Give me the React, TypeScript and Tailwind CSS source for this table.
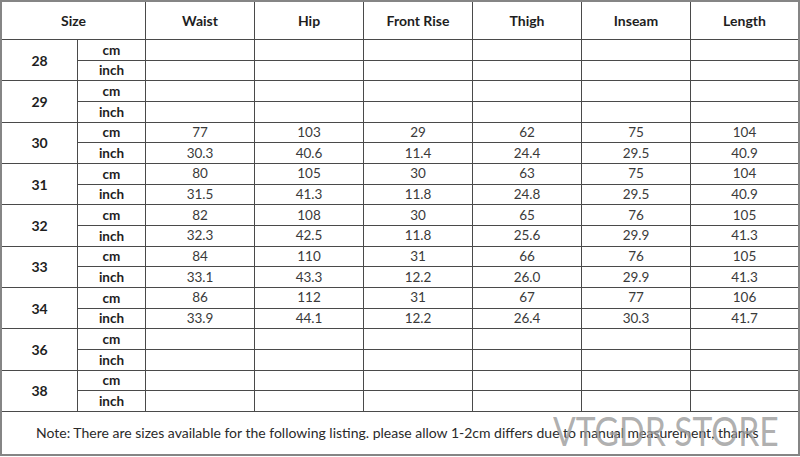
import React from 'react';

const headers = ['Waist', 'Hip', 'Front Rise', 'Thigh', 'Inseam', 'Length'];

type SizeRow = { size: string; cm: string[]; inch: string[] };

const empty = ['', '', '', '', '', ''];

const rows: SizeRow[] = [
  { size: '28', cm: empty, inch: empty },
  { size: '29', cm: empty, inch: empty },
  { size: '30', cm: ['77', '103', '29', '62', '75', '104'], inch: ['30.3', '40.6', '11.4', '24.4', '29.5', '40.9'] },
  { size: '31', cm: ['80', '105', '30', '63', '75', '104'], inch: ['31.5', '41.3', '11.8', '24.8', '29.5', '40.9'] },
  { size: '32', cm: ['82', '108', '30', '65', '76', '105'], inch: ['32.3', '42.5', '11.8', '25.6', '29.9', '41.3'] },
  { size: '33', cm: ['84', '110', '31', '66', '76', '105'], inch: ['33.1', '43.3', '12.2', '26.0', '29.9', '41.3'] },
  { size: '34', cm: ['86', '112', '31', '67', '77', '106'], inch: ['33.9', '44.1', '12.2', '26.4', '30.3', '41.7'] },
  { size: '36', cm: empty, inch: empty },
  { size: '38', cm: empty, inch: empty },
];

const line = 'border-[#4a4a4a]';

const ValueRow: React.FC<{ unit: string; values: string[] }> = ({ unit, values }) => (
  <>
    <div className={`flex items-center justify-center border-r border-b ${line} text-[13.5px] font-bold text-[#1e1e1e]`}>
      {unit}
    </div>
    {values.map((v, i) => (
      <div
        key={i}
        className={`flex items-end justify-center border-b ${line} ${i < 5 ? 'border-r' : ''} text-[13.5px] text-[#3a3a3a]`}
      >
        {v}
      </div>
    ))}
  </>
);

export default function App() {
  return (
    <div className="w-[800px] h-[457px] bg-white" style={{ fontFamily: 'Lato, "Open Sans", sans-serif' }}>
      <div className="relative w-[800px] h-[456px] border-2 border-[#858585] grid grid-cols-[76px_68px_109px_109px_109px_109px_109px_107px] grid-rows-[38px_repeat(18,minmax(0,1fr))_42px]">
        <div className={`col-span-2 flex items-center justify-center border-r border-b ${line} text-[14px] font-bold text-[#1e1e1e]`}>
          Size
        </div>
        {headers.map((h, i) => (
          <div
            key={h}
            className={`flex items-center justify-center border-b ${line} ${i < 5 ? 'border-r' : ''} text-[14px] font-bold text-[#1e1e1e]`}
          >
            {h}
          </div>
        ))}

        {rows.map((r) => (
          <React.Fragment key={r.size}>
            <div
              className={`row-span-2 flex items-center justify-center border-r border-b ${line} text-[14px] font-bold text-[#1e1e1e]`}
            >
              {r.size}
            </div>
            <div className="col-span-7 grid grid-cols-subgrid row-span-2 grid-rows-subgrid">
              <ValueRow unit="cm" values={r.cm} />
              <ValueRow unit="inch" values={r.inch} />
            </div>
          </React.Fragment>
        ))}

        <div className="col-span-8 flex items-center pl-[34px] text-[14px] text-[#2a2a2a]">
          Note: There are sizes available for the following listing. please allow 1-2cm differs due to manual measurement, thanks
        </div>

        <div className="absolute left-[551px] bottom-[3px] origin-left scale-x-[0.82] whitespace-nowrap text-[41px] font-normal leading-none text-[#9a9a9a]/80 pointer-events-none">
          VTGDR STORE
        </div>
      </div>
    </div>
  );
}
